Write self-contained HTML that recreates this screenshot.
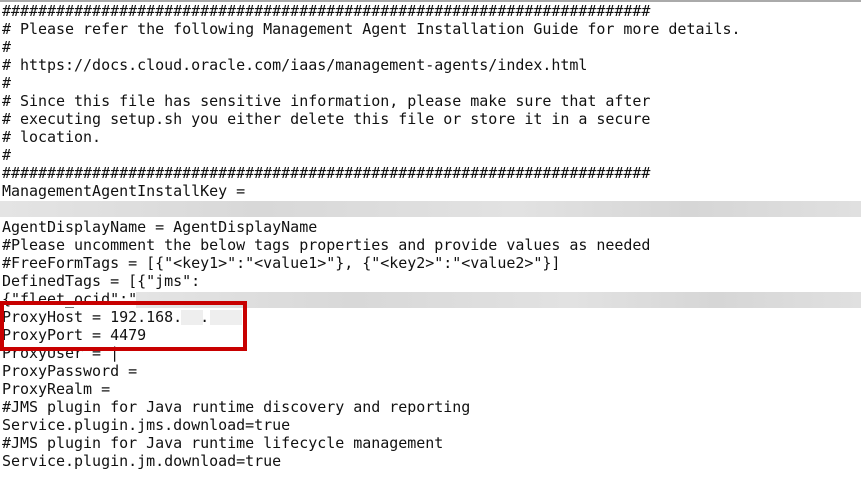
<!DOCTYPE html>
<html><head><meta charset="utf-8"><style>
html,body{margin:0;padding:0;background:#fff;width:861px;height:489px;overflow:hidden;position:relative}
.t{position:absolute;left:2px;top:2px;margin:0;font-family:"DejaVu Sans Mono","Liberation Mono",monospace;font-size:15px;line-height:18px;color:#111;white-space:pre;letter-spacing:-0.025px}
.topline{position:absolute;left:0;top:0;width:861px;height:2px;background:#aaa}
.b{position:absolute;background:linear-gradient(90deg,#e4e4e4,#d8d8d8 30%,#e2e2e2 60%,#d6d6d6 80%,#e0e0e0)}
.box{position:absolute;left:0;top:301px;width:239px;height:42px;border:4px solid #c80000}
</style></head><body>
<div class="topline"></div>
<pre class="t">########################################################################
# Please refer the following Management Agent Installation Guide for more details.
#
# https://docs.cloud.oracle.com/iaas/management-agents/index.html
#
# Since this file has sensitive information, please make sure that after
# executing setup.sh you either delete this file or store it in a secure
# location.
#
########################################################################
ManagementAgentInstallKey =

AgentDisplayName = AgentDisplayName
#Please uncomment the below tags properties and provide values as needed
#FreeFormTags = [{"&lt;key1&gt;":"&lt;value1&gt;"}, {"&lt;key2&gt;":"&lt;value2&gt;"}]
DefinedTags = [{"jms":
{"fleet_ocid":"
ProxyHost = 192.168.  .
ProxyPort = 4479
ProxyUser = |
ProxyPassword =
ProxyRealm =
#JMS plugin for Java runtime discovery and reporting
Service.plugin.jms.download=true
#JMS plugin for Java runtime lifecycle management
Service.plugin.jm.download=true</pre>
<div class="b" style="left:0;top:201px;width:861px;height:16px"></div>
<div class="b" style="left:136px;top:292px;width:725px;height:16px"></div>
<div style="position:absolute;left:181px;top:310px;width:22px;height:15px;background:#eee"></div>
<div style="position:absolute;left:210px;top:310px;width:32px;height:15px;background:#eee"></div>
<div class="box"></div>
</body></html>
